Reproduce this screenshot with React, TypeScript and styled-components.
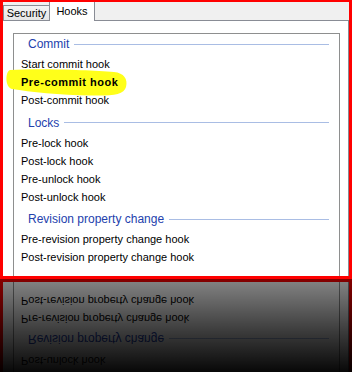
import styled, { createGlobalStyle } from 'styled-components';

const GlobalStyle = createGlobalStyle`
  html, body {
    margin: 0;
    padding: 0;
    background: #000;
  }
  body {
    font-family: 'Liberation Sans', Arial, sans-serif;
    font-size: 11px;
    color: #000;
  }
`;

const Scene = styled.div`
  width: 352px;
  height: 372px;
  overflow: hidden;
  display: flex;
  flex-direction: column;
`;

const Frame = styled.div`
  flex: none;
  height: 279px;
  box-sizing: border-box;
  border: 3px solid #ff0000;
  border-top-width: 2px;
  background: #f0f0f0;
  display: flex;
  flex-direction: column;
  overflow: hidden;
`;

const TabStrip = styled.div`
  flex: none;
  height: 18px;
  display: flex;
  align-items: flex-end;
`;

const Tab = styled.div<{ $active?: boolean }>`
  position: relative;
  box-sizing: border-box;
  display: flex;
  align-items: center;
  justify-content: center;
  width: ${(p) => (p.$active ? 46 : 47)}px;
  height: ${(p) => (p.$active ? 20 : 15)}px;
  margin-bottom: ${(p) => (p.$active ? -1 : 0)}px;
  margin-left: ${(p) => (p.$active ? -1 : 0)}px;
  padding-bottom: ${(p) => (p.$active ? 2 : 0)}px;
  border: 1px solid #898c95;
  border-bottom: none;
  background: ${(p) =>
    p.$active ? '#fff' : 'linear-gradient(#f3f3f3, #e6e6e6)'};
  z-index: ${(p) => (p.$active ? 1 : 0)};
`;

const TabPage = styled.div`
  flex: 1;
  min-height: 0;
  display: flex;
  flex-direction: column;
  background: #fff;
  border-top: 1px solid #898c95;
  border-right: 1px solid #898c95;
`;

const GroupBox = styled.div`
  flex: 1;
  width: 327px;
  box-sizing: border-box;
  margin: 12px 0 0 10px;
  border: 1px solid #8e8f8f;
  border-bottom: none;
  padding-right: 10px;
`;

const Section = styled.div`
  & + & {
    margin-top: 3.5px;
  }
`;

const Heading = styled.div`
  display: flex;
  align-items: center;
  gap: 5px;
  height: 20px;
  padding-left: 14px;
  font-size: 12px;
  color: #2341ad;
  white-space: nowrap;

  &::after {
    content: '';
    flex: 1;
    height: 1px;
    background: #a9bde4;
  }
`;

const Items = styled.div`
  margin-top: 1px;
`;

const Item = styled.div<{ $marked?: boolean }>`
  position: relative;
  height: 18px;
  line-height: 18px;
  padding-left: 7px;
  white-space: nowrap;
  font-weight: ${(p) => (p.$marked ? 700 : 400)};
  letter-spacing: ${(p) => (p.$marked ? '0.5px' : 'normal')};
`;

const Label = styled.span`
  position: relative;
  z-index: 1;
`;

const Marker = styled.svg`
  position: absolute;
  left: -10px;
  top: -7px;
  width: 126px;
  height: 32px;
  z-index: 0;
`;

const Reflection = styled.div`
  position: relative;
  flex: none;
  height: 93px;
  overflow: hidden;

  &::after {
    content: '';
    position: absolute;
    inset: 0;
    background: linear-gradient(
      rgba(0, 0, 0, 0.48) 0%,
      rgba(0, 0, 0, 0.76) 55%,
      rgba(0, 0, 0, 0.97) 100%
    );
  }
`;

const Mirror = styled.div`
  transform: scaleY(-1);
`;

const sections = [
  {
    title: 'Commit',
    hooks: ['Start commit hook', 'Pre-commit hook', 'Post-commit hook'],
  },
  {
    title: 'Locks',
    hooks: ['Pre-lock hook', 'Post-lock hook', 'Pre-unlock hook', 'Post-unlock hook'],
  },
  {
    title: 'Revision property change',
    hooks: ['Pre-revision property change hook', 'Post-revision property change hook'],
  },
];

function HooksPanel() {
  return (
    <Frame>
      <TabStrip>
        <Tab>Security</Tab>
        <Tab $active>Hooks</Tab>
      </TabStrip>
      <TabPage>
        <GroupBox>
          {sections.map((s) => (
            <Section key={s.title}>
              <Heading>{s.title}</Heading>
              <Items>
                {s.hooks.map((h) => {
                  const marked = h === 'Pre-commit hook';
                  return (
                    <Item key={h} $marked={marked}>
                      {marked && (
                        <Marker viewBox="4 66 126 32">
                          <path
                            d="M10 70 C40 68 90 70 114 72 C124 73 128 79 126 87 C124 95 112 96 90 95.5 C60 95 30 92 12 89 C5 87.5 5 72 10 70 Z"
                            fill="#ffff1a"
                          />
                        </Marker>
                      )}
                      <Label>{h}</Label>
                    </Item>
                  );
                })}
              </Items>
            </Section>
          ))}
        </GroupBox>
      </TabPage>
    </Frame>
  );
}

export default function App() {
  return (
    <>
      <GlobalStyle />
      <Scene>
        <HooksPanel />
        <Reflection aria-hidden>
          <Mirror>
            <HooksPanel />
          </Mirror>
        </Reflection>
      </Scene>
    </>
  );
}
